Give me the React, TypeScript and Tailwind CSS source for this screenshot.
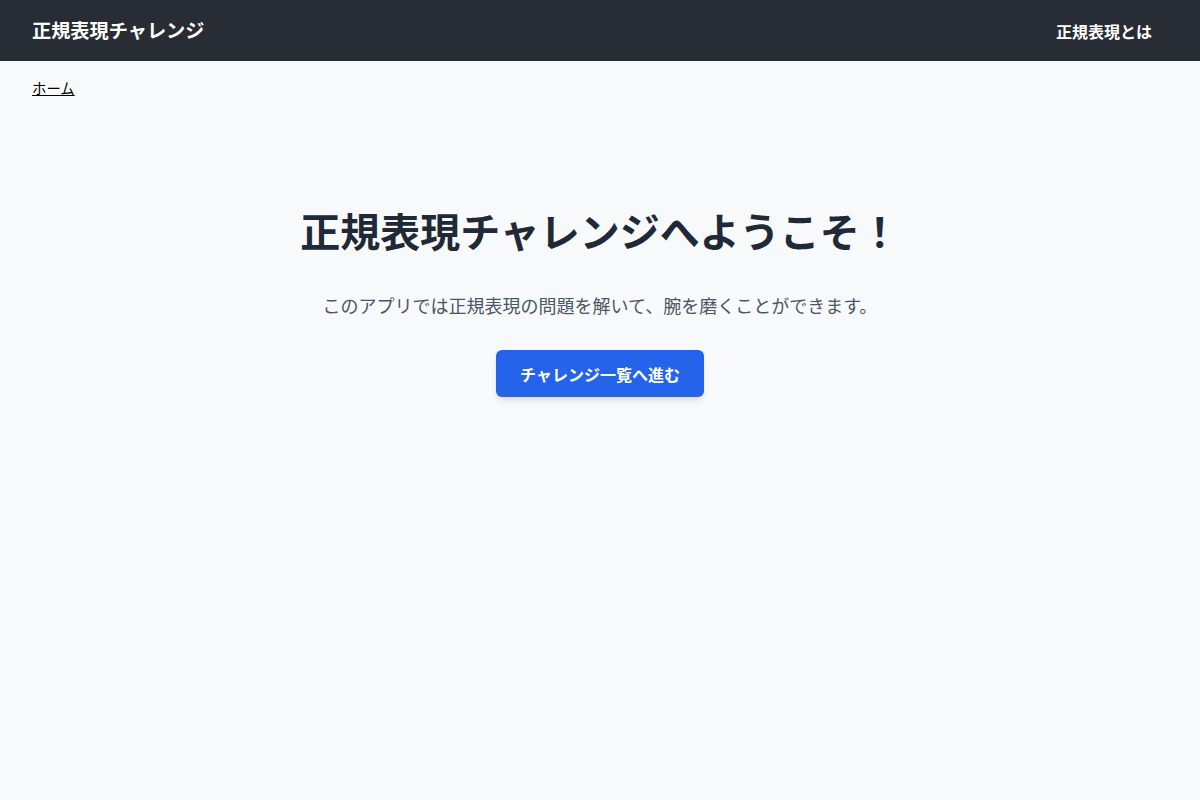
const App = () => {
  return (
    <div
      className="min-h-screen bg-[#f8f9fa] text-[#1f2937]"
      style={{ fontFamily: '"Noto Sans CJK JP", "Noto Sans", sans-serif' }}
    >
      <header className="h-[61px] bg-[#282c34] flex items-center justify-between px-8">
        <h1 className="text-[19.2px] font-bold text-white">正規表現チャレンジ</h1>
        <nav>
          <a href="#" className="text-base font-bold text-white pr-4">
            正規表現とは
          </a>
        </nav>
      </header>

      <main className="px-8 pt-4">
        <nav className="text-[14.4px] leading-5 pt-px">
          <a href="#" className="text-black underline">
            ホーム
          </a>
        </nav>

        <section className="flex flex-col items-center pt-[108px]">
          <h2 className="text-[40px] leading-[48px] font-bold text-[#1f2937]">
            正規表現チャレンジへようこそ！
          </h2>
          <p className="mt-[37px] text-lg leading-7 text-[#4b5563]">
            このアプリでは正規表現の問題を解いて、腕を磨くことができます。
          </p>
          <button className="mt-[31px] h-[47px] px-6 rounded-md bg-[#2563eb] text-white text-base font-bold shadow-md hover:bg-[#1d4ed8]">
            チャレンジ一覧へ進む
          </button>
        </section>
      </main>
    </div>
  );
};

export default App;
